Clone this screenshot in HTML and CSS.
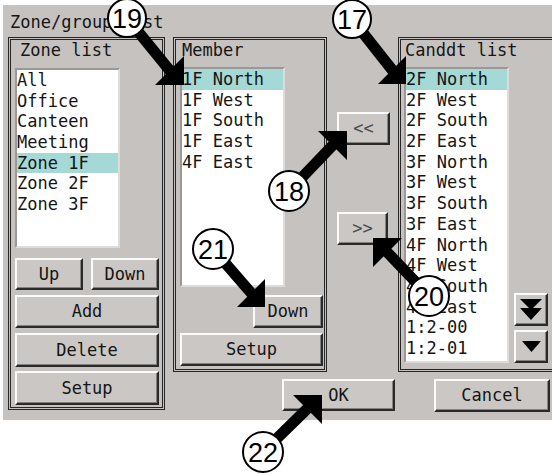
FILE: index.html
```html
<!DOCTYPE html>
<html lang="en">
<head>
    <meta charset="UTF-8">
    <title>Zone/group list</title>
    <link rel="stylesheet" href="styles.css">
</head>
<body>

    <div class="screen">
        <div class="title">Zone/group list</div>

        <div class="main">
            <!-- Zone list -->
            <div class="frame zone-frame">
                <div class="frame-title">Zone list</div>
                <ul class="listbox zone-list">
                    <li>All</li>
                    <li>Office</li>
                    <li>Canteen</li>
                    <li>Meeting</li>
                    <li class="selected">Zone 1F</li>
                    <li>Zone 2F</li>
                    <li>Zone 3F</li>
                </ul>
                <div class="btn-row">
                    <button class="btn btn-half">Up</button>
                    <button class="btn btn-half">Down</button>
                </div>
                <button class="btn btn-wide btn-add">Add</button>
                <button class="btn btn-wide btn-delete">Delete</button>
                <button class="btn btn-wide btn-setup">Setup</button>
            </div>

            <div class="right">
                <div class="top">
                    <!-- Member -->
                    <div class="frame member-frame">
                        <div class="frame-title">Member</div>
                        <ul class="listbox member-list">
                            <li class="selected">1F North</li>
                            <li>1F West</li>
                            <li>1F South</li>
                            <li>1F East</li>
                            <li>4F East</li>
                        </ul>
                        <div class="down-row">
                            <button class="btn btn-down">Down</button>
                        </div>
                        <button class="btn btn-member-setup">Setup</button>
                    </div>

                    <!-- Move buttons -->
                    <div class="move">
                        <button class="btn btn-move btn-add-member">&lt;&lt;</button>
                        <button class="btn btn-move btn-remove-member">&gt;&gt;</button>
                    </div>

                    <!-- Candidate list -->
                    <div class="frame cand-frame">
                        <div class="frame-title">Canddt list</div>
                        <div class="cand-body">
                            <ul class="listbox cand-list">
                                <li class="selected">2F North</li>
                                <li>2F West</li>
                                <li>2F South</li>
                                <li>2F East</li>
                                <li>3F North</li>
                                <li>3F West</li>
                                <li>3F South</li>
                                <li>3F East</li>
                                <li>4F North</li>
                                <li>4F West</li>
                                <li>4F South</li>
                                <li>4F East</li>
                                <li>1:2-00</li>
                                <li>1:2-01</li>
                            </ul>
                            <div class="scroll">
                                <button class="btn btn-scroll">
                                    <svg width="24" height="23" viewBox="0 0 24 23">
                                        <polygon points="1,1 23,1 12,12" fill="#000"/>
                                        <polygon points="1,10 23,10 12,22" fill="#000"/>
                                    </svg>
                                </button>
                                <button class="btn btn-scroll">
                                    <svg width="19" height="11" viewBox="0 0 19 11">
                                        <polygon points="0,0 19,0 9.5,11" fill="#000"/>
                                    </svg>
                                </button>
                            </div>
                        </div>
                    </div>
                </div>

                <div class="actions">
                    <button class="btn btn-ok">OK</button>
                    <button class="btn btn-cancel">Cancel</button>
                </div>
            </div>
        </div>
    </div>

    <!-- Callout numbers and arrows -->
    <svg class="callouts" width="552" height="474" viewBox="0 0 552 474">
        <g stroke="#000" stroke-width="11">
            <line x1="127" y1="18" x2="171" y2="72"/>
            <line x1="352" y1="19" x2="393" y2="71"/>
            <line x1="289" y1="191" x2="334" y2="144"/>
            <line x1="213" y1="249" x2="252" y2="294"/>
            <line x1="429" y1="296" x2="387" y2="252"/>
            <line x1="263" y1="452" x2="308" y2="408"/>
        </g>
        <g fill="#000">
            <polygon points="184,56 184,85 155,85"/>
            <polygon points="406,56 406,84 378,84"/>
            <polygon points="318,131 347,131 347,160"/>
            <polygon points="265,279 265,307 237,307"/>
            <polygon points="373,238 402,238 373,267"/>
            <polygon points="293,395 322,395 322,424"/>
        </g>
        <g fill="#fff" stroke="#000" stroke-width="2">
            <circle cx="127" cy="18" r="19"/>
            <circle cx="352" cy="19" r="19"/>
            <circle cx="289" cy="191" r="20"/>
            <circle cx="213" cy="249" r="20"/>
            <circle cx="429" cy="296" r="20"/>
            <circle cx="263" cy="452" r="20"/>
        </g>
        <g class="callout-num" text-anchor="middle">
            <text x="127" y="28">19</text>
            <text x="352" y="29">17</text>
            <text x="289" y="201">18</text>
            <text x="213" y="259">21</text>
            <text x="429" y="306">20</text>
            <text x="263" y="462">22</text>
        </g>
    </svg>

</body>
</html>
```

FILE: styles.css
```css
* {
    box-sizing: border-box;
}

html, body {
    margin: 0;
    padding: 0;
    overflow: hidden;
}

body {
    position: relative;
    width: 552px;
    height: 474px;
    background-color: #fff;
    font-family: "DejaVu Sans Mono", monospace;
    font-size: 17px;
    line-height: 19px;
    color: #151515;
}

.screen {
    margin: 5px 0 0 3px;
    width: 549px;
    height: 415px;
    padding-top: 8px;
    background-color: #c5c2bf;
    overflow: hidden;
}

.title {
    padding-left: 7px;
    height: 19px;
}

.main {
    display: flex;
    gap: 8px;
    margin-top: 5px;
    padding-left: 5px;
}

/* frames */
.frame {
    border: 3px double #262626;
    flex: none;
}

.frame-title {
    height: 19px;
    margin-top: 1px;
}

.zone-frame {
    width: 157px;
    height: 373px;
    padding: 0 3px 0 4px;
}

.zone-frame .frame-title {
    padding-left: 5px;
}

.member-frame {
    width: 154px;
    height: 335px;
    padding: 0 1px 0 4px;
}

.member-frame .frame-title {
    padding-left: 2px;
}

.cand-frame {
    width: 165px;
    height: 335px;
    padding: 0 0 0 3px;
}

.cand-frame .frame-title {
    padding-left: 1px;
}

/* list boxes */
.listbox {
    list-style: none;
    margin: 0;
    padding: 0;
    width: 105px;
    background-color: #fff;
    border: 2px solid;
    border-color: #9b9896 #dedcda #dedcda #9b9896;
    overflow: hidden;
    line-height: 20.7px;
}

.listbox li {
    white-space: pre;
    height: 20.7px;
}

.listbox .selected {
    background-color: #a4d9d6;
}

.zone-list {
    height: 180px;
    margin-top: 8px;
}

.member-list {
    height: 220px;
    margin-top: 7px;
}

.cand-body {
    display: flex;
    align-items: flex-end;
    gap: 5px;
    margin-top: 7px;
}

.cand-list {
    height: 296px;
}

.scroll {
    display: flex;
    flex-direction: column;
    gap: 4px;
}

/* buttons */
.btn {
    display: flex;
    align-items: center;
    justify-content: center;
    padding: 0;
    margin: 0;
    font-family: "DejaVu Sans Mono", monospace;
    font-size: 17px;
    line-height: 19px;
    color: #151515;
    background-color: #cac7c4;
    border: 2px solid;
    border-color: #fbfbfb #2a2a2a #2a2a2a #fbfbfb;
    box-shadow: inset -1px -1px 0 #84817f;
}

.btn-row {
    display: flex;
    gap: 8px;
    margin-top: 10px;
}

.btn-half {
    width: 68px;
    height: 32px;
}

.btn-wide {
    width: 144px;
    height: 33px;
}

.btn-add {
    margin-top: 5px;
}

.btn-delete {
    margin-top: 5px;
    height: 34px;
}

.btn-setup {
    margin-top: 4px;
    height: 34px;
}

.down-row {
    display: flex;
    justify-content: flex-end;
    margin-top: 8px;
}

.btn-down {
    width: 70px;
    height: 33px;
}

.btn-member-setup {
    width: 143px;
    height: 33px;
    margin-top: 5px;
}

.move {
    flex: none;
    width: 71px;
    margin-left: -8px;
    margin-right: -8px;
    padding-left: 10px;
}

.btn-move {
    height: 33px;
    color: #4a4a4a;
}

.btn-add-member {
    width: 53px;
    margin-top: 75px;
}

.btn-remove-member {
    width: 51px;
    margin-top: 67px;
}

.btn-scroll {
    width: 34px;
    height: 33px;
}

.right {
    display: flex;
    flex-direction: column;
}

.top {
    display: flex;
    gap: 8px;
}

.actions {
    display: flex;
    margin-top: 7px;
}

.btn-ok {
    width: 113px;
    height: 32px;
    margin-left: 109px;
}

.btn-cancel {
    width: 116px;
    height: 33px;
    margin-left: 39px;
}

/* callouts */
.callouts {
    position: absolute;
    left: 0;
    top: 0;
    pointer-events: none;
}

.callout-num {
    font-family: "Liberation Sans", Arial, sans-serif;
    font-size: 27px;
    fill: #000;
}
```
